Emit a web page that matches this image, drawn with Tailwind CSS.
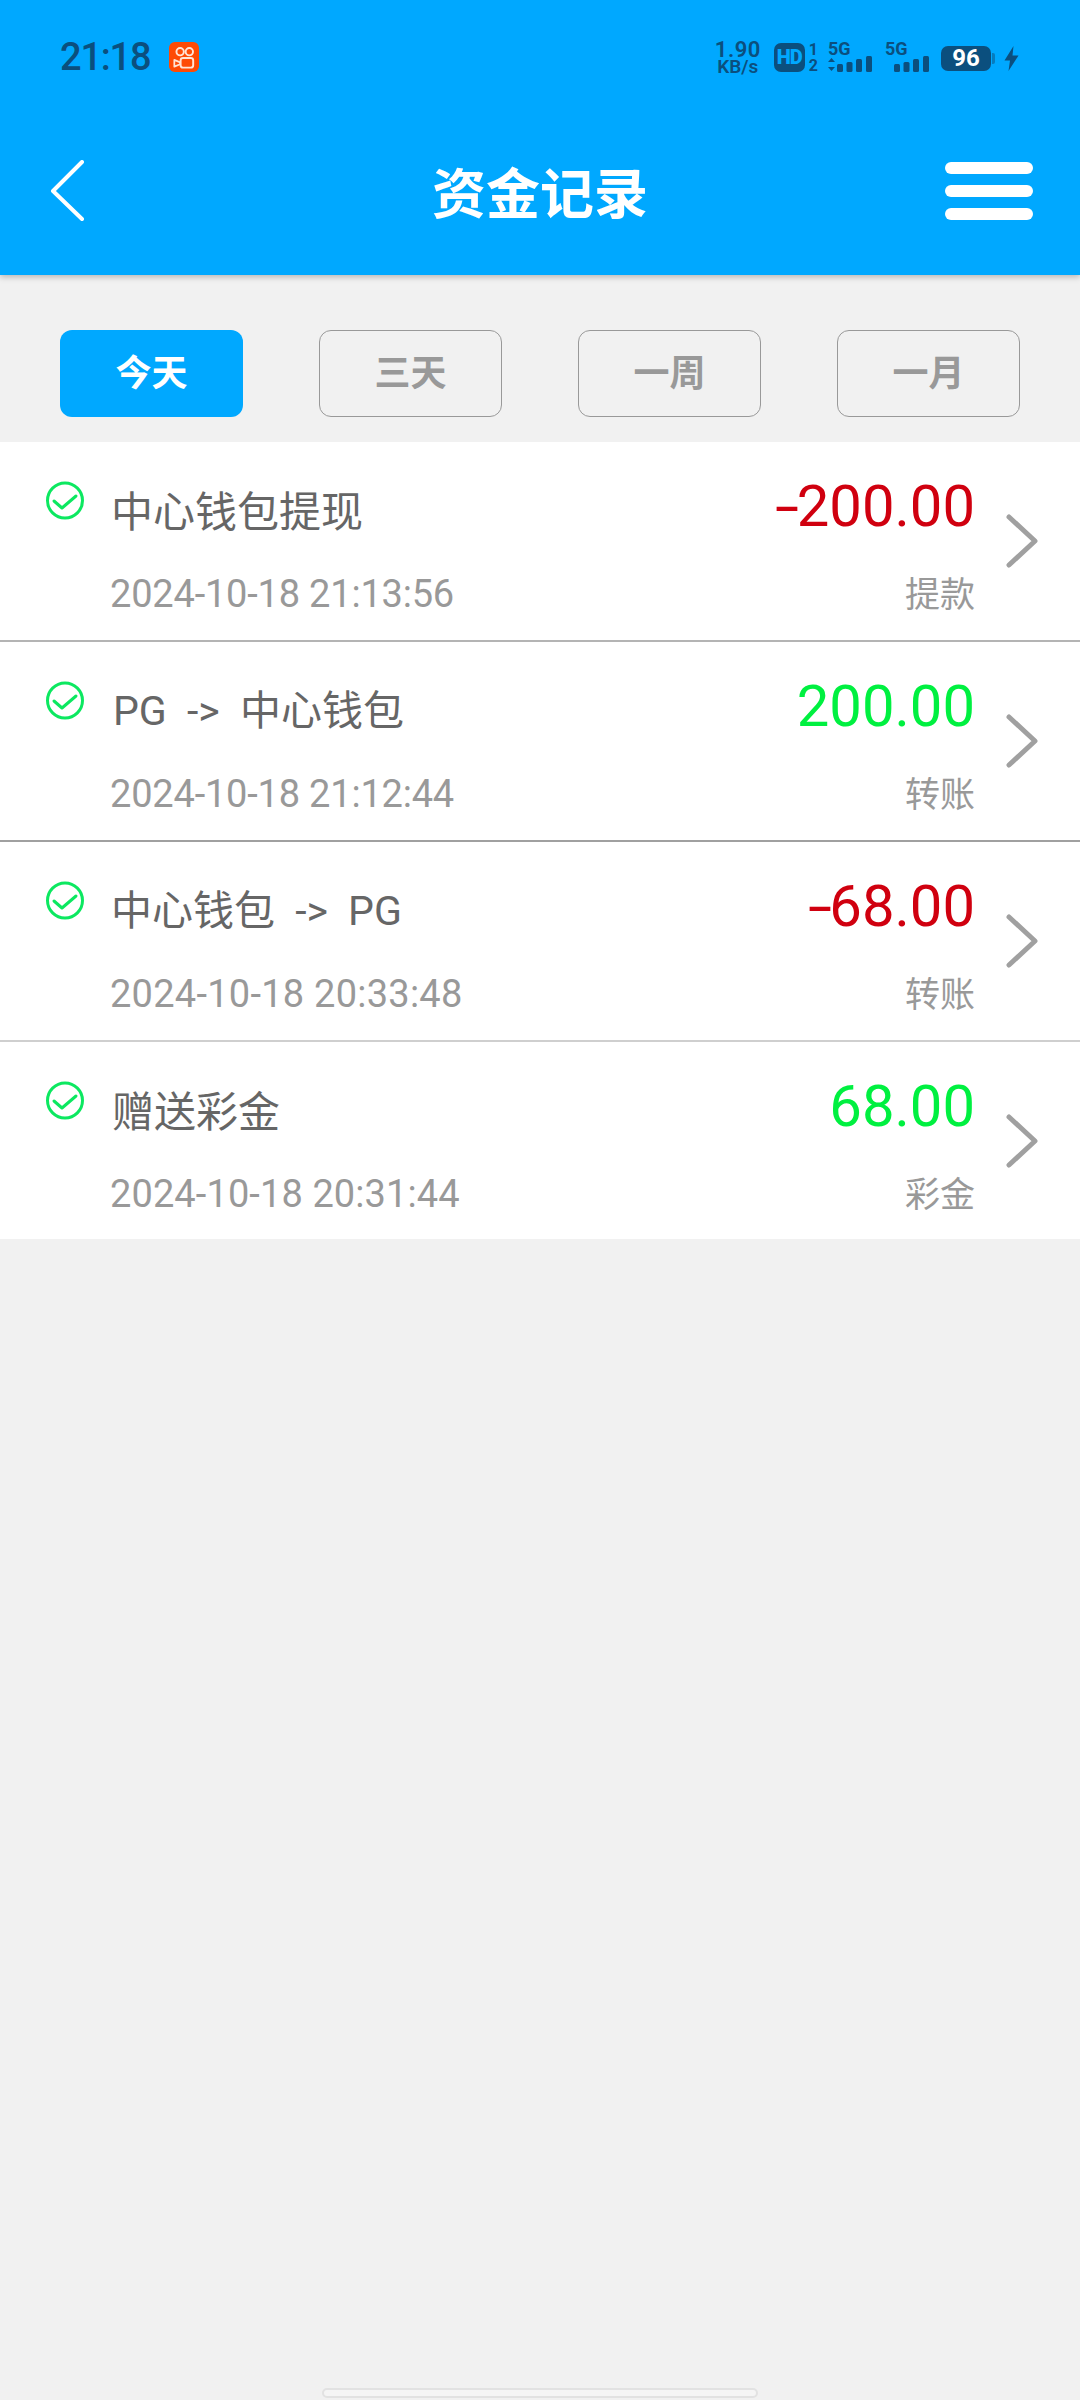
<!DOCTYPE html>
<html lang="zh-CN">

<head>
    <meta charset="UTF-8">
    <meta name="viewport" content="width=device-width, initial-scale=1.0">
    <title>资金记录</title>
    <script src="https://cdn.jsdelivr.net/npm/@tailwindcss/browser@4"></script>
</head>

<body class="bg-[#f1f1f1] w-[1080px] h-[2400px] flex flex-col overflow-hidden font-['Roboto','Noto_Sans_CJK_SC',sans-serif]">
    <!-- Header -->
    <header class="bg-[#00a8ff] h-[275px] shrink-0 shadow-[0_2px_6px_rgba(0,0,0,0.25)] relative">
        <!-- Status bar -->
        <div class="h-[100px] pl-[60px] pr-[61px] pt-[37px] flex justify-between items-start text-[#0b4f7e]">
            <div class="flex items-center">
                <span class="text-[38px] leading-[40px] font-medium tracking-[-1.2px]">21:18</span>
                <svg class="ml-[19px]" width="30" height="30" viewBox="0 0 31 31" fill="none">
                    <rect width="31" height="31" rx="6" fill="#fe4a05" />
                    <circle cx="11.5" cy="10" r="3.8" stroke="#ffe4d6" stroke-width="2" />
                    <circle cx="21" cy="10" r="3.8" stroke="#ffe4d6" stroke-width="2" />
                    <rect x="12" y="16.5" width="13" height="10" rx="2.5" stroke="#ffe4d6" stroke-width="2" />
                    <path d="M5.5 18.5l6 2.5v2l-6 2.5z" stroke="#ffe4d6" stroke-width="1.8" stroke-linejoin="round" />
                </svg>
            </div>
            <div class="flex items-start pt-[4px]">
                <div class="flex flex-col items-center font-semibold w-[44px]">
                    <span class="text-[22px] leading-[17px] tracking-[0.5px]">1.90</span>
                    <span class="text-[19px] leading-[17px]">KB/s</span>
                </div>
                <div class="ml-[14px] w-[31px] h-[29px] mt-[2px] rounded-[7px] bg-[#0b4f7e] text-[#00a8ff] text-[20px] font-black leading-[29px] text-center tracking-[-1px]">HD</div>
                <div class="ml-[4px] mt-[1px] flex flex-col items-center font-bold text-[16px] leading-[16px]">
                    <span>1</span>
                    <span>2</span>
                </div>
                <!-- SIM 1 -->
                <div class="ml-[10px] w-[45px] relative h-[30px] mt-[2px]">
                    <span class="absolute left-0 top-[-2px] text-[18px] leading-[16px] font-bold">5G</span>
                    <svg class="absolute left-0 top-[13px]" width="45" height="17" viewBox="0 0 45 17" fill="#0b4f7e">
                        <path d="M3.5 2l3.5 4h-7zM3.5 15l3.5-4h-7z" />
                        <rect x="9" y="8" width="6" height="8" rx="1.5" />
                        <rect x="18.500" y="6" width="6" height="10" rx="1.5" />
                        <rect x="28" y="3" width="6" height="13" rx="1.5" />
                        <rect x="38" y="0" width="6" height="16" rx="1.5" />
                    </svg>
                </div>
                <!-- SIM 2 -->
                <div class="ml-[12px] w-[45px] relative h-[30px] mt-[2px]">
                    <span class="absolute left-0 top-[-2px] text-[18px] leading-[16px] font-bold">5G</span>
                    <svg class="absolute left-0 top-[13px]" width="45" height="17" viewBox="0 0 45 17" fill="#0b4f7e">
                        <rect x="9" y="8" width="6" height="8" rx="1.5" />
                        <rect x="18.500" y="6" width="6" height="10" rx="1.5" />
                        <rect x="28" y="3" width="6" height="13" rx="1.5" />
                        <rect x="38" y="0" width="6" height="16" rx="1.5" />
                    </svg>
                </div>
                <!-- Battery -->
                <div class="ml-[11px] mt-[5px] flex items-center">
                    <div class="w-[50px] h-[25px] rounded-[7px] bg-[#0b4f7e] text-white text-[24px] font-bold leading-[25px] text-center">96</div>
                    <div class="w-[3px] h-[11px] ml-[1px] rounded-r-[2px] bg-[#0b4f7e]/50"></div>
                </div>
                <svg class="ml-[9px] mt-[5px]" width="15" height="25" viewBox="0 0 15 25" fill="#0b4f7e">
                    <path d="M9.500 0L0.500 14.500H6L4.500 25L14.500 9.500H8.500z" />
                </svg>
            </div>
        </div>
        <!-- Title bar -->
        <div class="h-[175px] flex items-center justify-between pl-[50px] pr-[47px] relative pt-[7px]">
            <svg width="36" height="62" viewBox="0 0 36 62" fill="none">
                <path d="M32 2L3 31L32 59" stroke="white" stroke-width="4" stroke-linecap="round" stroke-linejoin="round" />
            </svg>
            <h1 class="absolute left-0 right-0 top-[61px] text-center text-white text-[54px] leading-[70px] font-bold">资金记录</h1>
            <div class="flex flex-col gap-[11px]">
                <div class="w-[88px] h-[12px] rounded-full bg-white"></div>
                <div class="w-[88px] h-[12px] rounded-full bg-white"></div>
                <div class="w-[88px] h-[12px] rounded-full bg-white"></div>
            </div>
        </div>
    </header>

    <!-- Date range tabs -->
    <div class="pt-[55px] pb-[25px] pl-[60px] pr-[60px] flex justify-between">
        <button class="w-[183px] h-[87px] rounded-[12px] bg-[#00a8ff] text-white text-[36px] font-bold">今天</button>
        <button class="w-[183px] h-[87px] rounded-[12px] border border-[#999] text-[#999] text-[36px] font-bold">三天</button>
        <button class="w-[183px] h-[87px] rounded-[12px] border border-[#999] text-[#999] text-[36px] font-bold">一周</button>
        <button class="w-[183px] h-[87px] rounded-[12px] border border-[#999] text-[#999] text-[36px] font-bold">一月</button>
    </div>

    <!-- Records -->
    <ul class="bg-white">
        <li class="h-[200px] flex items-center pl-[45px] pr-[40px] border-b-2 border-[#b4b4b4]">
            <svg class="self-start mt-[38px] shrink-0" width="40" height="40" viewBox="0 0 40 40" fill="none">
                <circle cx="20" cy="20.500" r="17.500" stroke="#0ce860" stroke-width="3" />
                <path d="M9 21l8 7 14-12" stroke="#0ce860" stroke-width="3" stroke-linecap="round" stroke-linejoin="round" />
            </svg>
            <div class="flex-1 ml-[25px] self-start mt-[27px]">
                <div class="flex justify-between items-center h-[82px] pt-[4px]">
                    <span class="text-[42px] text-[#666] pl-[1px]">中心钱包提现</span>
                    <span class="text-[58px] text-[#d0000f] mb-[12px]"><span class="inline-block origin-left scale-x-150 mr-[6px]">-</span>200.00</span>
                </div>
                <div class="flex justify-between items-center mt-[15px] h-[56px]">
                    <span class="text-[38px] text-[#999] tracking-[-0.2px]">2024-10-18 21:13:56</span>
                    <span class="text-[35px] text-[#999] pt-[5px]">提款</span>
                </div>
            </div>
            <svg class="ml-[31px] shrink-0" width="34" height="54" viewBox="0 0 34 54" fill="none">
                <path d="M3 3L29 27L3 51" stroke="#a0a0a0" stroke-width="5" stroke-linecap="round" stroke-linejoin="round" />
            </svg>
        </li>
        <li class="h-[200px] flex items-center pl-[45px] pr-[40px] border-b-2 border-[#a0a0a0]">
            <svg class="self-start mt-[38px] shrink-0" width="40" height="40" viewBox="0 0 40 40" fill="none">
                <circle cx="20" cy="20.500" r="17.500" stroke="#0ce860" stroke-width="3" />
                <path d="M9 21l8 7 14-12" stroke="#0ce860" stroke-width="3" stroke-linecap="round" stroke-linejoin="round" />
            </svg>
            <div class="flex-1 ml-[25px] self-start mt-[27px]">
                <div class="flex justify-between items-center h-[82px] pt-[4px]">
                    <span class="text-[41px] text-[#666] pl-[3px] [word-spacing:10px]">PG -&gt; 中心钱包</span>
                    <span class="text-[58px] text-[#00f040] mb-[12px]">200.00</span>
                </div>
                <div class="flex justify-between items-center mt-[15px] h-[56px]">
                    <span class="text-[38px] text-[#999] tracking-[-0.2px]">2024-10-18 21:12:44</span>
                    <span class="text-[35px] text-[#999] pt-[5px]">转账</span>
                </div>
            </div>
            <svg class="ml-[31px] shrink-0" width="34" height="54" viewBox="0 0 34 54" fill="none">
                <path d="M3 3L29 27L3 51" stroke="#a0a0a0" stroke-width="5" stroke-linecap="round" stroke-linejoin="round" />
            </svg>
        </li>
        <li class="h-[200px] flex items-center pl-[45px] pr-[40px] border-b-2 border-[#cfcfcf]">
            <svg class="self-start mt-[38px] shrink-0" width="40" height="40" viewBox="0 0 40 40" fill="none">
                <circle cx="20" cy="20.500" r="17.500" stroke="#0ce860" stroke-width="3" />
                <path d="M9 21l8 7 14-12" stroke="#0ce860" stroke-width="3" stroke-linecap="round" stroke-linejoin="round" />
            </svg>
            <div class="flex-1 ml-[25px] self-start mt-[27px]">
                <div class="flex justify-between items-center h-[82px] pt-[4px]">
                    <span class="text-[41px] text-[#666] pl-[1px] [word-spacing:10px]">中心钱包 -&gt; PG</span>
                    <span class="text-[58px] text-[#d0000f] mb-[12px]"><span class="inline-block origin-left scale-x-150 mr-[5px]">-</span>68.00</span>
                </div>
                <div class="flex justify-between items-center mt-[15px] h-[56px]">
                    <span class="text-[38px] text-[#999] tracking-[0.25px]">2024-10-18 20:33:48</span>
                    <span class="text-[35px] text-[#999] pt-[5px]">转账</span>
                </div>
            </div>
            <svg class="ml-[31px] shrink-0" width="34" height="54" viewBox="0 0 34 54" fill="none">
                <path d="M3 3L29 27L3 51" stroke="#a0a0a0" stroke-width="5" stroke-linecap="round" stroke-linejoin="round" />
            </svg>
        </li>
        <li class="h-[197px] flex items-center pl-[45px] pr-[40px]">
            <svg class="self-start mt-[38px] shrink-0" width="40" height="40" viewBox="0 0 40 40" fill="none">
                <circle cx="20" cy="20.500" r="17.500" stroke="#0ce860" stroke-width="3" />
                <path d="M9 21l8 7 14-12" stroke="#0ce860" stroke-width="3" stroke-linecap="round" stroke-linejoin="round" />
            </svg>
            <div class="flex-1 ml-[25px] self-start mt-[27px]">
                <div class="flex justify-between items-center h-[82px] pt-[4px]">
                    <span class="text-[42px] text-[#666] pl-[2px]">赠送彩金</span>
                    <span class="text-[58px] text-[#00f040] mb-[12px]">68.00</span>
                </div>
                <div class="flex justify-between items-center mt-[15px] h-[56px]">
                    <span class="text-[38px] text-[#999] tracking-[0.1px]">2024-10-18 20:31:44</span>
                    <span class="text-[35px] text-[#999] pt-[5px]">彩金</span>
                </div>
            </div>
            <svg class="ml-[31px] shrink-0" width="34" height="54" viewBox="0 0 34 54" fill="none">
                <path d="M3 3L29 27L3 51" stroke="#a0a0a0" stroke-width="5" stroke-linecap="round" stroke-linejoin="round" />
            </svg>
        </li>
    </ul>

    <!-- Gesture bar -->
    <div class="mt-auto mb-[2px] mx-auto w-[436px] h-[10px] rounded-full bg-[#f5f5f5] border-2 border-[#e2e2e2]"></div>
</body>

</html>
